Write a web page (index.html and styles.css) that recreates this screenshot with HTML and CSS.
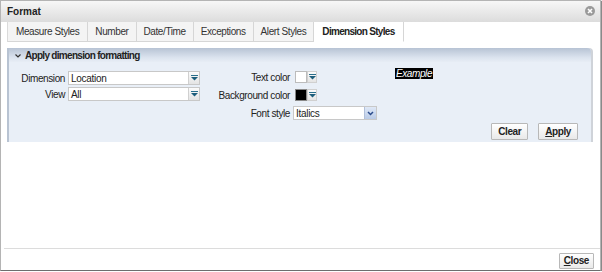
FILE: index.html
```html
<!DOCTYPE html>
<html lang="en">
<head>
    <meta charset="UTF-8">
    <meta name="viewport" content="width=device-width, initial-scale=1.0">
    <title>Format</title>
    <link rel="stylesheet" href="styles.css">
</head>
<body>
    <div class="dialog">
        <div class="titlebar">
            <span class="title">Format</span>
            <span class="close-icon">
                <svg width="10" height="10" viewBox="0 0 10 10">
                    <circle cx="5" cy="5" r="5" fill="#9a9a9a"/>
                    <path d="M3 3 L7 7 M7 3 L3 7" stroke="#fff" stroke-width="1.6"/>
                </svg>
            </span>
        </div>

        <div class="tabs">
            <div class="tab">Measure Styles</div>
            <div class="tab">Number</div>
            <div class="tab">Date/Time</div>
            <div class="tab">Exceptions</div>
            <div class="tab">Alert Styles</div>
            <div class="tab active">Dimension Styles</div>
        </div>

        <div class="content">
            <div class="panel">
                <div class="panel-header">
                    <svg class="chevron" width="6" height="4" viewBox="0 0 6 4">
                        <polyline points="0.5,0.5 3,3 5.5,0.5" fill="none" stroke="#333" stroke-width="1.2"/>
                    </svg>
                    <span>Apply dimension formatting</span>
                </div>
                <div class="panel-body">
                    <div class="fields">
                        <div class="field-grid left-grid">
                            <label>Dimension</label>
                            <div class="select wide">
                                <span>Location</span>
                                <span class="arrow-btn">
                                    <svg width="7" height="6" viewBox="0 0 7 6"><rect x="0" y="0" width="7" height="1" fill="#2a6f8c"/><polygon points="0,2 7,2 3.5,5.5" fill="#1d5e7c"/></svg>
                                </span>
                            </div>
                            <label>View</label>
                            <div class="select wide">
                                <span>All</span>
                                <span class="arrow-btn">
                                    <svg width="7" height="6" viewBox="0 0 7 6"><rect x="0" y="0" width="7" height="1" fill="#2a6f8c"/><polygon points="0,2 7,2 3.5,5.5" fill="#1d5e7c"/></svg>
                                </span>
                            </div>
                        </div>

                        <div class="field-grid mid-grid">
                            <label>Text color</label>
                            <div class="color-pick">
                                <span class="swatch white"></span>
                                <span class="arrow-btn small">
                                    <svg width="7" height="6" viewBox="0 0 7 6"><rect x="0" y="0" width="7" height="1" fill="#2a6f8c"/><polygon points="0,2 7,2 3.5,5.5" fill="#1d5e7c"/></svg>
                                </span>
                            </div>
                            <label>Background color</label>
                            <div class="color-pick">
                                <span class="swatch black"></span>
                                <span class="arrow-btn small">
                                    <svg width="7" height="6" viewBox="0 0 7 6"><rect x="0" y="0" width="7" height="1" fill="#2a6f8c"/><polygon points="0,2 7,2 3.5,5.5" fill="#1d5e7c"/></svg>
                                </span>
                            </div>
                            <label>Font style</label>
                            <div class="select narrow">
                                <span>Italics</span>
                                <span class="arrow-btn blue">
                                    <svg width="7" height="5" viewBox="0 0 7 5"><polyline points="1,1 3.5,3.5 6,1" fill="none" stroke="#2b4c8c" stroke-width="1.5"/></svg>
                                </span>
                            </div>
                        </div>

                        <div class="example">Example</div>
                    </div>
                    <div class="panel-buttons">
                        <button class="btn">Clear</button>
                        <button class="btn"><u>A</u>pply</button>
                    </div>
                </div>
            </div>
        </div>

        <div class="footer">
            <button class="btn close-btn"><u>C</u>lose</button>
        </div>
    </div>
</body>
</html>
```

FILE: styles.css
```css
body {
    margin: 0;
    padding: 0;
    background-color: #ffffff;
    font-family: "Liberation Sans", Arial, sans-serif;
    font-size: 10px;
    color: #222222;
}
.dialog {
    width: 599px;
    height: 269px;
    border: 1px solid #b4b4b4;
    border-bottom-color: #6e6e6e;
    box-shadow: 1px 1px 1px #8a8a8a;
    display: flex;
    flex-direction: column;
    background-color: #ffffff;
}
.titlebar {
    height: 21px;
    display: flex;
    align-items: center;
    justify-content: space-between;
    padding: 0 5px 0 6px;
    background: linear-gradient(#f7f7f7, #dcdcdc);
}
.title {
    font-weight: bold;
    color: #222;
}
.close-icon {
    display: flex;
    margin-top: -1px;
}
.tabs {
    display: flex;
    height: 20px;
    margin-left: 6px;
    border-left: 1px solid #dadada;
}
.tab {
    padding: 0 7px;
    display: flex;
    align-items: center;
    letter-spacing: -0.4px;
    color: #333;
    background-color: #f4f4f4;
    border-right: 1px solid #d6d6d6;
    border-bottom: 1px solid #d6d6d6;
}
.tab:first-child {
    padding: 0 8px;
}
.tab.active {
    padding: 0 8px;
    background-color: #ffffff;
    border-bottom-color: #ffffff;
    font-weight: bold;
    letter-spacing: -0.7px;
    color: #222;
}
.content {
    flex: 1;
    padding: 6px 9px 0 6px;
}
.panel {
    background-color: #e9eff7;
    border-left: 2px solid #b8c3d2;
    border-radius: 0 4px 0 0;
    box-shadow: 2px 0 0 #cfd3d9;
}
.panel-header {
    height: 14px;
    display: flex;
    align-items: center;
    gap: 4px;
    padding-left: 6px;
    font-weight: bold;
    letter-spacing: -0.7px;
    border-radius: 0 4px 0 0;
    background: linear-gradient(#b7c3d4, #dce4ef 70%, #e7edf5);
}
.chevron {
    margin-top: 1px;
}
.panel-body {
    padding: 8px 13px 2px 5px;
}
.fields {
    display: flex;
    align-items: flex-start;
}
.field-grid {
    display: grid;
    align-items: center;
}
.field-grid label {
    text-align: right;
    letter-spacing: -0.4px;
    white-space: nowrap;
}
.left-grid {
    grid-template-columns: 51px 132px;
    grid-auto-rows: 14px;
    column-gap: 3px;
    row-gap: 2px;
    margin-top: 1px;
}
.mid-grid {
    grid-template-columns: 80px 84px;
    grid-auto-rows: 14px;
    column-gap: 3px;
    row-gap: 4px;
    margin-left: 10px;
}
.select {
    height: 14px;
    box-sizing: border-box;
    border: 1px solid #c8c8c8;
    background-color: #ffffff;
    display: flex;
    align-items: center;
    justify-content: space-between;
    padding-left: 2px;
    letter-spacing: -0.3px;
}
.arrow-btn {
    width: 11px;
    height: 12px;
    box-sizing: border-box;
    display: flex;
    align-items: center;
    justify-content: center;
    background: linear-gradient(#fbfbfb, #e4e4e4);
    border-left: 1px solid #d0d0d0;
}
.arrow-btn.small {
    width: 10px;
    height: 12px;
    border: 1px solid #d0d0d0;
}
.arrow-btn.blue {
    width: 12px;
    background: linear-gradient(#dfe8f7, #b9cae6);
    border-left: 1px solid #b1c0da;
}
.color-pick {
    display: flex;
    align-items: center;
    margin-left: 2px;
}
.swatch {
    width: 12px;
    height: 12px;
    box-sizing: border-box;
    border: 1px solid #bcbcbc;
}
.swatch.white {
    background-color: #ffffff;
}
.swatch.black {
    background-color: #000000;
    border-color: #888;
}
.example {
    margin-left: 18px;
    margin-top: -2px;
    padding: 0 1px;
    height: 11px;
    line-height: 11px;
    background-color: #000000;
    color: #ffffff;
    font-style: italic;
    letter-spacing: -0.4px;
}
.panel-buttons {
    display: flex;
    justify-content: flex-end;
    gap: 10px;
    margin-top: 3px;
}
.btn {
    font-family: "Liberation Sans", Arial, sans-serif;
    font-size: 10px;
    font-weight: bold;
    letter-spacing: -0.4px;
    color: #222;
    height: 17px;
    padding: 0 6px;
    border: 1px solid #b8b8b8;
    border-radius: 1px;
    background: linear-gradient(#ffffff, #e9e9e9);
}
.footer {
    height: 21px;
    margin-left: 3px;
    border-top: 1px solid #dcdcdc;
    display: flex;
    align-items: center;
    justify-content: flex-end;
    padding-right: 6px;
}
.close-btn {
    height: 16px;
    padding: 0 4px;
    margin-top: 2px;
}
```
